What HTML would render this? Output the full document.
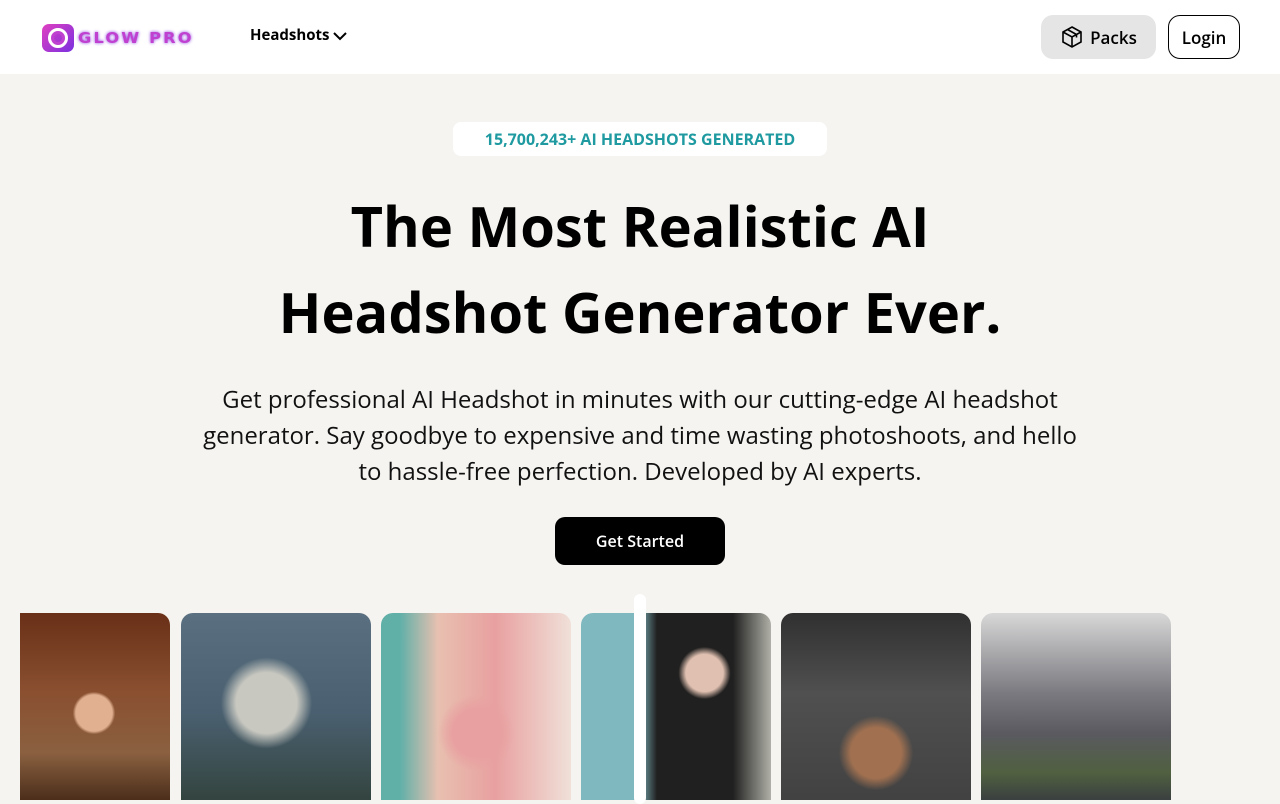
<!DOCTYPE html>
<html><head><meta charset="utf-8"><style>
*{margin:0;padding:0;box-sizing:border-box}
body{width:1280px;height:800px;overflow:hidden;background:#f5f4f0;font-family:"Open Sans","DejaVu Sans","Liberation Sans",sans-serif;color:#000;position:relative}
.nav{position:absolute;left:0;top:0;width:1280px;height:74px;background:#fff}
.logo{position:absolute;left:42px;top:24px;display:flex;align-items:center}
.logo .ic{width:32px;height:28px;border-radius:7px;background:linear-gradient(135deg,#e040c0,#7a30e0);display:flex;align-items:center;justify-content:center}
.logo .ic span{width:20px;height:20px;border-radius:50%;border:3px solid #fff;box-shadow:inset 0 0 0 3px #c040d0}
.logo .t{margin-left:4px;font:bold 15px "DejaVu Sans",sans-serif;letter-spacing:2px;color:#c040d0;text-shadow:0 0 3px #8a40e0;transform:scaleX(1.08);transform-origin:left}
.hs{position:absolute;left:250px;top:25px;font-size:15px;font-weight:bold}
.packs{position:absolute;left:1041px;top:15px;width:115px;height:44px;border-radius:12px;background:#e5e5e5;display:flex;align-items:center;justify-content:center;font-size:17px;font-weight:600;gap:6px}
.login{position:absolute;left:1168px;top:15px;width:72px;height:44px;border-radius:12px;border:1.5px solid #000;background:#fff;display:flex;align-items:center;justify-content:center;font-size:17px;font-weight:600}
.badge{position:absolute;left:453px;top:122px;width:374px;height:34px;background:#fff;border-radius:8px;text-align:center;line-height:34px;color:#1e9aa0;font-weight:bold;font-size:16px}
h1{position:absolute;left:0;top:183px;width:1280px;text-align:center;font-size:56px;line-height:86px;font-weight:bold}
.sub{position:absolute;left:190px;top:382px;width:900px;text-align:center;font-size:24px;line-height:36px;color:#111}
.btn{position:absolute;left:555px;top:517px;width:170px;height:48px;background:#000;color:#fff;border-radius:10px;text-align:center;line-height:48px;font-size:16px;font-weight:600}
.card{position:absolute;top:613px;width:190px;height:200px;border-radius:12px}
.bar{position:absolute;left:634px;top:594px;width:12px;height:210px;background:#fff;border-radius:6px}
</style></head><body>
<div class="nav">
<div class="logo"><div class="ic"><span></span></div><div class="t">GLOW PRO</div></div>
<div class="hs">Headshots <svg width="14" height="10" viewBox="0 0 14 10" style="vertical-align:middle"><path d="M1 2l6 6 6-6" stroke="#000" stroke-width="2" fill="none"/></svg></div>
<div class="packs"><svg width="24" height="24" viewBox="0 0 24 24" fill="none" stroke="#000" stroke-width="1.6"><path d="M12 2l9 5v10l-9 5-9-5V7z"/><path d="M3 7l9 5 9-5M12 12v10M7.5 4.5l9 5v3"/></svg>Packs</div>
<div class="login">Login</div>
</div>
<div class="badge">15,700,243+ AI HEADSHOTS GENERATED</div>
<h1>The Most Realistic AI<br>Headshot Generator Ever.</h1>
<div class="sub">Get professional AI Headshot in minutes with our cutting-edge AI headshot generator. Say goodbye to expensive and time wasting photoshoots, and hello to hassle-free perfection. Developed by AI experts.</div>
<div class="btn">Get Started</div>
<div style="position:absolute;left:20px;top:0;width:1260px;height:800px;overflow:hidden">
<div class="card" style="left:-40px;background:radial-gradient(circle at 60% 50%,#e0b090 0 12%,transparent 14%),linear-gradient(180deg,#6a3018,#8a5030 40%,#8a6040 70%,#3a2010)"></div>
<div class="card" style="left:161px;background:radial-gradient(circle at 45% 45%,#c8c8c0 0 20%,transparent 30%),linear-gradient(180deg,#5a7080,#4a6070 50%,#304038)"></div>
<div class="card" style="left:361px;background:radial-gradient(circle at 50% 60%,#e8a0a0 0 15%,transparent 25%),linear-gradient(90deg,#60b0a8 0 10%,#e8c0b0 30%,#e8a0a0 60%,#f0e0d8)"></div>
<div class="card" style="left:561px;background:radial-gradient(circle at 65% 30%,#e0c0b0 0 10%,transparent 14%),linear-gradient(90deg,#80b8c0 0 30%,#202020 40%,#202020 80%,#b0b0a8)"></div>
<div class="card" style="left:761px;background:radial-gradient(circle at 50% 70%,#a07050 0 15%,transparent 22%),linear-gradient(180deg,#303030,#505050 40%,#404040)"></div>
<div class="card" style="left:961px;background:linear-gradient(180deg,#d8d8d8,#7a7a80 40%,#5a5a60 60%,#506040 80%,#303040)"></div>
</div>
<div class="bar"></div>
</body></html>
